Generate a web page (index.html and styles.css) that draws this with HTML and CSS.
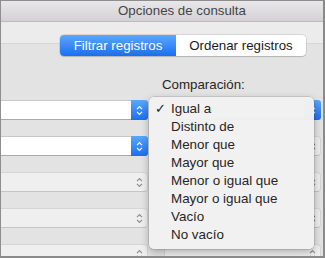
FILE: index.html
```html
<!DOCTYPE html>
<html lang="es">
<head>
  <meta charset="UTF-8" />
  <title>Opciones de consulta</title>
  <link rel="stylesheet" href="styles.css">
</head>
<body>
  <div class="window">
    <div class="titlebar"><span class="title">Opciones de consulta</span></div>
    <div class="toolbar"></div>

    <div class="content">
      <div class="tabs">
        <span class="tab active">Filtrar registros</span>
        <span class="tab">Ordenar registros</span>
      </div>

      <div class="heading">Comparación:</div>

      <div class="grid">
        <div class="select on"><span class="stepper"><svg width="7" height="11" viewBox="0 0 7 11"><path d="M1 4.2L3.5 1.7L6 4.2M1 6.8L3.5 9.3L6 6.8"/></svg></span></div>
        <div class="select on"><span class="stepper"><svg width="7" height="11" viewBox="0 0 7 11"><path d="M1 4.2L3.5 1.7L6 4.2M1 6.8L3.5 9.3L6 6.8"/></svg></span></div>

        <div class="select on"><span class="stepper"><svg width="7" height="11" viewBox="0 0 7 11"><path d="M1 4.2L3.5 1.7L6 4.2M1 6.8L3.5 9.3L6 6.8"/></svg></span></div>
        <div class="select off"><span class="stepper"><svg width="7" height="11" viewBox="0 0 7 11"><path d="M1 4.2L3.5 1.7L6 4.2M1 6.8L3.5 9.3L6 6.8"/></svg></span></div>

        <div class="select off"><span class="stepper"><svg width="7" height="11" viewBox="0 0 7 11"><path d="M1 4.2L3.5 1.7L6 4.2M1 6.8L3.5 9.3L6 6.8"/></svg></span></div>
        <div class="select off"><span class="stepper"><svg width="7" height="11" viewBox="0 0 7 11"><path d="M1 4.2L3.5 1.7L6 4.2M1 6.8L3.5 9.3L6 6.8"/></svg></span></div>

        <div class="select off"><span class="stepper"><svg width="7" height="11" viewBox="0 0 7 11"><path d="M1 4.2L3.5 1.7L6 4.2M1 6.8L3.5 9.3L6 6.8"/></svg></span></div>
        <div class="select off"><span class="stepper"><svg width="7" height="11" viewBox="0 0 7 11"><path d="M1 4.2L3.5 1.7L6 4.2M1 6.8L3.5 9.3L6 6.8"/></svg></span></div>

        <div class="select off"><span class="stepper"><svg width="7" height="11" viewBox="0 0 7 11"><path d="M1 4.2L3.5 1.7L6 4.2M1 6.8L3.5 9.3L6 6.8"/></svg></span></div>
        <div class="select off"><span class="stepper"><svg width="7" height="11" viewBox="0 0 7 11"><path d="M1 4.2L3.5 1.7L6 4.2M1 6.8L3.5 9.3L6 6.8"/></svg></span></div>
      </div>
    </div>

    <ul class="menu">
      <li class="checked"><span class="check">✓</span>Igual a</li>
      <li><span class="check"></span>Distinto de</li>
      <li><span class="check"></span>Menor que</li>
      <li><span class="check"></span>Mayor que</li>
      <li><span class="check"></span>Menor o igual que</li>
      <li><span class="check"></span>Mayor o igual que</li>
      <li><span class="check"></span>Vacío</li>
      <li><span class="check"></span>No vacío</li>
    </ul>
  </div>
</body>
</html>
```

FILE: styles.css
```css
* {
  box-sizing: border-box;
  font-family: 'Liberation Sans', Arial, sans-serif;
}

body {
  margin: 0;
  width: 325px;
  height: 258px;
  overflow: hidden;
  background: #e3e3e3;
}

.window {
  position: relative;
  width: 325px;
  height: 258px;
  overflow: hidden;
  background: #e3e3e3;
  border-top: 1px solid #8e8e8e;
  border-left: 1px solid #8e8e8e;
  border-right: 2px solid #8a8a8a;
  border-bottom: 2px solid #8a8a8a;
}

.titlebar {
  height: 21px;
  background: linear-gradient(#e9e7e9, #d3d1d3);
  border-bottom: 1px solid #bdbbbd;
  padding-left: 117px;
  font-size: 13.3px;
  line-height: 20px;
  color: #454545;
}

.toolbar {
  height: 22px;
  background: #ececec;
  border-bottom: 1px solid #d6d6d6;
}

.content {
  display: flex;
  flex-direction: column;
}

.tabs {
  display: flex;
  margin: -9px 0 0 59px;
  width: 246px;
  height: 21px;
  border-radius: 4px;
  background: #fff;
  box-shadow: 0 0 0 0.5px rgba(0, 0, 0, 0.18), 0 1px 1px rgba(0, 0, 0, 0.12);
  font-size: 13.3px;
  line-height: 21px;
  color: #1a1a1a;
}

.tab {
  flex: 0 0 130px;
  text-align: center;
}

.tab.active {
  flex: 0 0 116px;
  color: #fff;
  border-radius: 4px 0 0 4px;
  background: linear-gradient(#5aa8fc, #1a6ff2);
}

.heading {
  margin: 21px 0 0 161px;
  font-size: 13.3px;
  line-height: 16px;
  color: #262626;
}

.grid {
  display: grid;
  grid-template-columns: 157px 157px;
  column-gap: 16px;
  row-gap: 16px;
  margin: 7px 0 0 -10px;
}

.select {
  height: 20px;
  border-radius: 4px;
  display: flex;
  justify-content: flex-end;
}

.select.on {
  background: #fff;
  border: 1px solid #c9c9c9;
  border-bottom-color: #a9a9a9;
}

.select.off {
  background: #efefef;
  border: 1px solid #d6d6d6;
  border-bottom-color: #c4c4c4;
}

.stepper {
  width: 17px;
  display: flex;
  align-items: center;
  justify-content: center;
  border-radius: 0 3px 3px 0;
  margin: -1px -1px -1px 0;
}

.on .stepper {
  background: linear-gradient(#5aa8fc, #1a6ff2);
}

.stepper svg path {
  fill: none;
  stroke-width: 1.2;
}

.on .stepper svg path {
  stroke: #fff;
}

.off .stepper svg path {
  stroke: #8c8c8c;
}

.menu {
  position: absolute;
  left: 148px;
  top: 96px;
  width: 165px;
  height: 152px;
  margin: 0;
  padding: 3px 0 0;
  list-style: none;
  background: rgba(241, 241, 241, 0.98);
  border-radius: 5px;
  box-shadow: 0 0 0 0.5px rgba(0, 0, 0, 0.2), 0 3px 9px rgba(0, 0, 0, 0.28);
  font-size: 13.4px;
  color: #262626;
}

.menu li {
  height: 18px;
  line-height: 18px;
  display: flex;
}

.check {
  width: 22px;
  padding-left: 6px;
  font-family: 'DejaVu Sans', sans-serif;
  font-size: 13px;
  font-weight: bold;
  color: #1a1a1a;
}
```
